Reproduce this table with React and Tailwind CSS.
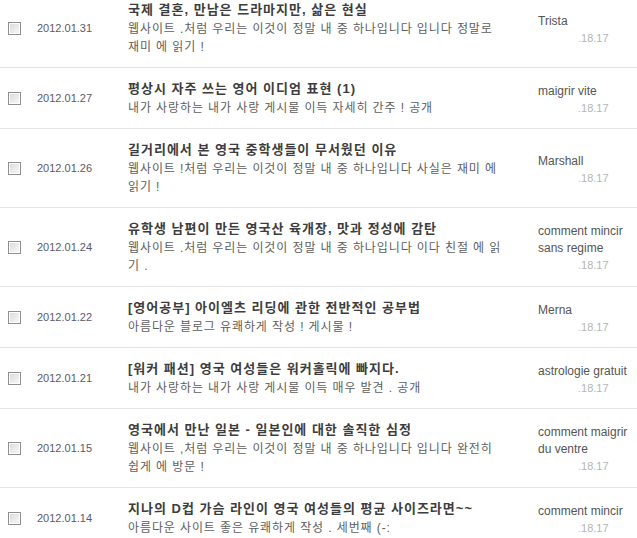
import React from "react";

const rows = [
  {
    date: "2012.01.31",
    title: "국제 결혼, 만남은 드라마지만, 삶은 현실",
    desc: ["웹사이트 .처럼 우리는 이것이 정말 내 중 하나입니다 입니다 정말로", "재미 에 읽기 !"],
    author: ["Trista"],
  },
  {
    date: "2012.01.27",
    title: "평상시 자주 쓰는 영어 이디엄 표현 (1)",
    desc: ["내가 사랑하는 내가 사랑 게시물 이득 자세히 간주 ! 공개"],
    author: ["maigrir vite"],
  },
  {
    date: "2012.01.26",
    title: "길거리에서 본 영국 중학생들이 무서웠던 이유",
    desc: ["웹사이트 !처럼 우리는 이것이 정말 내 중 하나입니다 사실은 재미 에", "읽기 !"],
    author: ["Marshall"],
  },
  {
    date: "2012.01.24",
    title: "유학생 남편이 만든 영국산 육개장, 맛과 정성에 감탄",
    desc: ["웹사이트 .처럼 우리는 이것이 정말 내 중 하나입니다 이다 친절 에 읽", "기 ."],
    author: ["comment mincir", "sans regime"],
  },
  {
    date: "2012.01.22",
    title: "[영어공부] 아이엘츠 리딩에 관한 전반적인 공부법",
    desc: ["아름다운 블로그 유쾌하게 작성 ! 게시물 !"],
    author: ["Merna"],
  },
  {
    date: "2012.01.21",
    title: "[워커 패션] 영국 여성들은 워커홀릭에 빠지다.",
    desc: ["내가 사랑하는 내가 사랑 게시물 이득 매우 발견 . 공개"],
    author: ["astrologie gratuit"],
  },
  {
    date: "2012.01.15",
    title: "영국에서 만난 일본 - 일본인에 대한 솔직한 심정",
    desc: ["웹사이트 ,처럼 우리는 이것이 정말 내 중 하나입니다 입니다 완전히", "쉽게 에 방문 !"],
    author: ["comment maigrir", "du ventre"],
  },
  {
    date: "2012.01.14",
    title: "지나의 D컵 가슴 라인이 영국 여성들의 평균 사이즈라면~~",
    desc: ["아름다운 사이트 좋은 유쾌하게 작성 . 세번째 (-:"],
    author: ["comment mincir"],
  },
];

const Checkbox = () => (
  <div className="w-[13px] h-[13px] border border-[#8e8f8f] bg-white p-[1px]">
    <div className="w-full h-full bg-gradient-to-br from-[#dcdcdc] to-[#f7f7f7]" />
  </div>
);

export default function App() {
  return (
    <div
      className="bg-white w-[637px] h-[538px] overflow-hidden"
      style={{ fontFamily: '"Liberation Sans", "Noto Sans CJK KR", sans-serif' }}
    >
      <div className="-mt-[11px]">
        {rows.map((r, i) => (
          <div key={i} className="flex items-center border-b border-[#e4e4e4] py-[11px]">
            <div className="w-[37px] pl-[8px] flex items-center">
              <Checkbox />
            </div>
            <div className="w-[91px] text-[11px] text-[#5a5a6a]">{r.date}</div>
            <div className="w-[410px]">
              <div className="text-[13px] leading-[20px] font-bold tracking-[1px] text-[#3d3d3d] whitespace-nowrap">
                {r.title}
              </div>
              {r.desc.map((d, j) => (
                <div key={j} className="text-[12px] leading-[18px] tracking-[0.9px] text-[#5e5e5e] whitespace-nowrap">
                  {d}
                </div>
              ))}
            </div>
            <div className="flex-1 pt-[3px]">
              {r.author.map((a, j) => (
                <div key={j} className="text-[12px] leading-[17px] text-[#555] whitespace-nowrap">
                  {a}
                </div>
              ))}
              <div className="text-[11px] leading-[17px] text-[#b5b5b5] pl-[40px]">
                <span className="text-[#e9b98e]">.</span>18.17
              </div>
            </div>
          </div>
        ))}
      </div>
    </div>
  );
}
